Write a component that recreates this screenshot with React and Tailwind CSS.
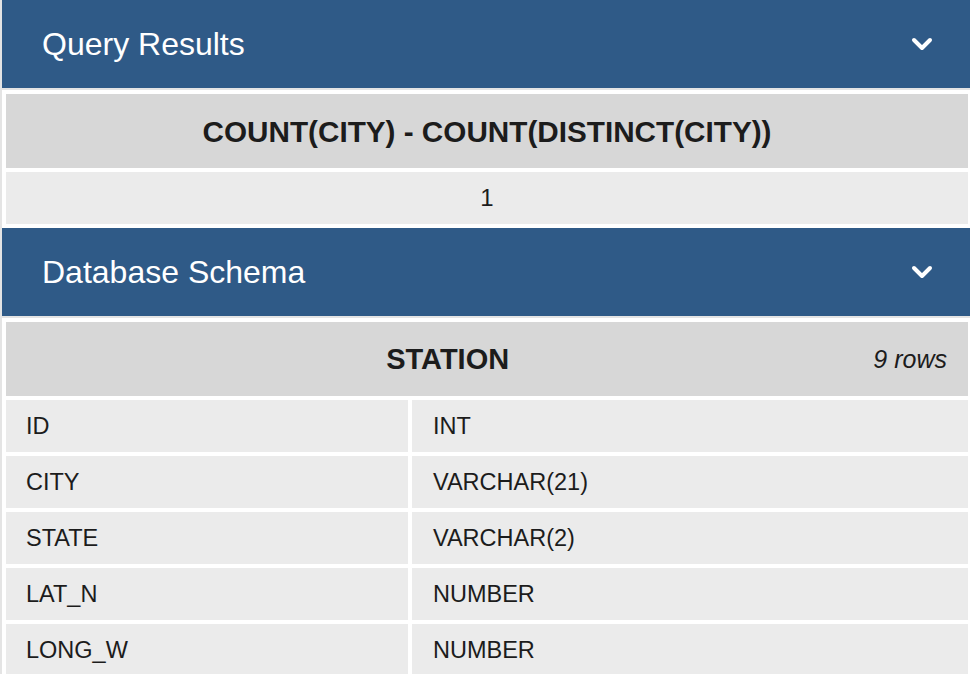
const schema = [
    ["ID", "INT"],
    ["CITY", "VARCHAR(21)"],
    ["STATE", "VARCHAR(2)"],
    ["LAT_N", "NUMBER"],
    ["LONG_W", "NUMBER"],
];

function Chevron() {
    return (
        <svg width="22" height="14" viewBox="0 0 22 14" fill="none">
            <polyline points="3,3 11,11 19,3" stroke="white" strokeWidth="4" strokeLinecap="round" strokeLinejoin="round" />
        </svg>
    );
}

function PanelHeader({ title }) {
    return (
        <div className="h-[88px] bg-[#2f5a87] flex items-center justify-between pl-[40px] pr-[37px] border-b-2 border-[#e4e4e4] box-content">
            <span className="text-white text-[32px] leading-none">{title}</span>
            <Chevron />
        </div>
    );
}

export default function App() {
    return (
        <div className="w-[970px] h-[674px] overflow-hidden bg-white border-l-2 border-[#e4e4e4] text-[#1c1c1c]" style={{ fontFamily: "'Liberation Sans', Arial, sans-serif" }}>
            <PanelHeader title="Query Results" />
            <div className="flex flex-col gap-1 py-1 pl-1 pr-[2px]">
                <div className="h-[74px] bg-[#d7d7d7] flex items-center justify-center font-bold text-[29.7px] pt-[2px]">COUNT(CITY) - COUNT(DISTINCT(CITY))</div>
                <div className="h-[52px] bg-[#ebebeb] flex items-center justify-center text-[24px]">1</div>
            </div>

            <PanelHeader title="Database Schema" />
            <div className="flex flex-col gap-1 py-1 pl-1 pr-[2px]">
                <div className="h-[74px] bg-[#d7d7d7] flex items-center pl-5 pr-[21px] pt-[2px]">
                    <span className="flex-1 text-center font-bold text-[29px] pr-1">STATION</span>
                    <span className="italic text-[25px]">9 rows</span>
                </div>
                {schema.map(([name, type]) => (
                    <div key={name} className="grid grid-cols-[402px_1fr] gap-1">
                        <div className="h-[52px] bg-[#ebebeb] flex items-center px-5 pt-[2px] text-[23.5px]">{name}</div>
                        <div className="h-[52px] bg-[#ebebeb] flex items-center px-[21px] pt-[2px] text-[23.5px]">{type}</div>
                    </div>
                ))}
            </div>
        </div>
    );
}
